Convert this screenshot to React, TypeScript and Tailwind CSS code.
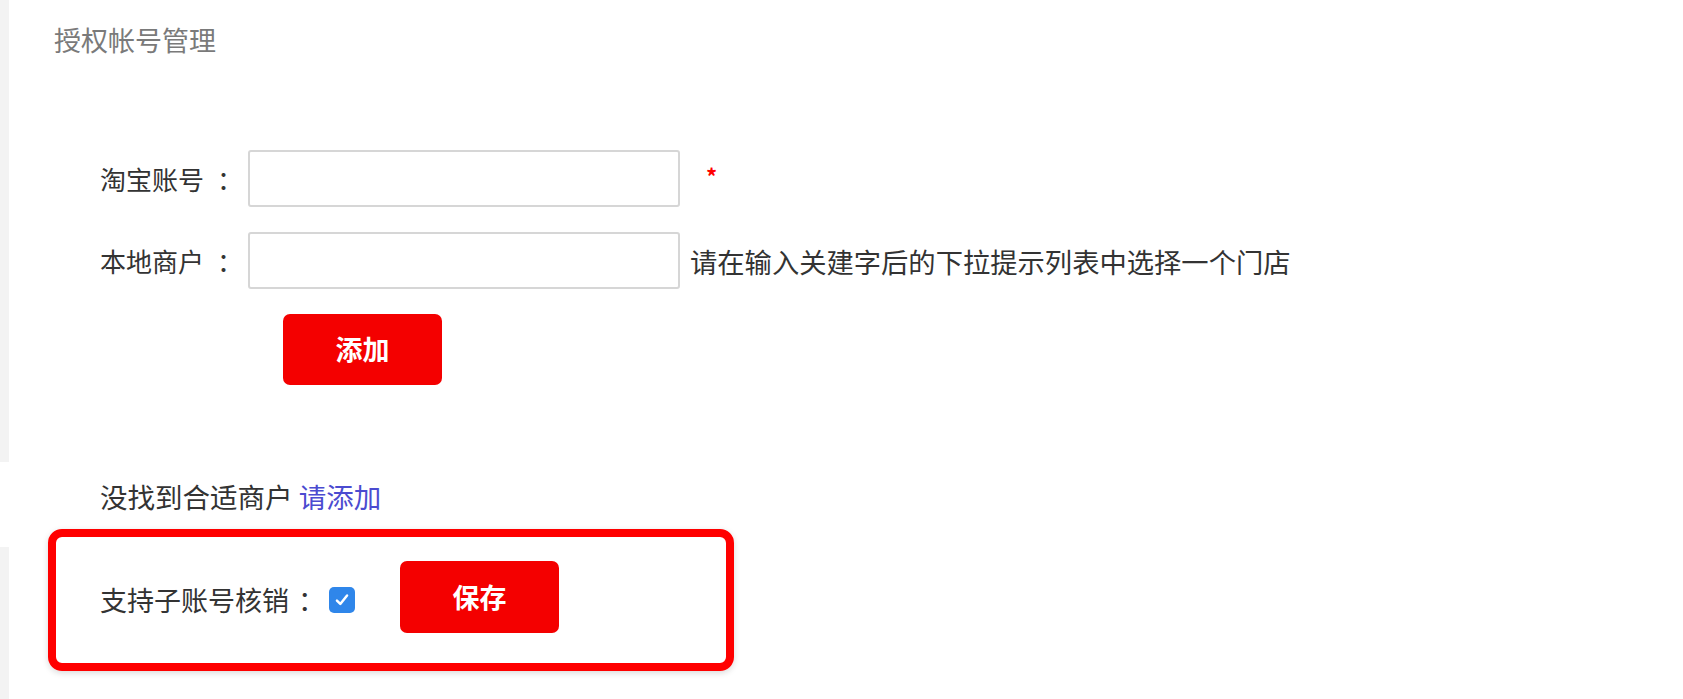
import React from "react";

const font = { fontFamily: '"Microsoft YaHei", "Noto Sans CJK SC", "Liberation Sans", sans-serif' };

function Check() {
  return (
    <span className="flex h-[26px] w-[26px] items-center justify-center rounded-[5px] bg-[#2f86ea]">
      <svg width="18" height="18" viewBox="0 0 16 16" fill="none">
        <path d="M3.5 8.5l3 3 6-7.5" stroke="#fff" strokeWidth="2.2" strokeLinecap="round" strokeLinejoin="round" />
      </svg>
    </span>
  );
}

export default function App() {
  return (
    <div className="flex h-[699px] w-[1683px] overflow-hidden bg-white text-[#333]" style={font}>
      <div className="flex w-[9px] shrink-0 flex-col">
        <div className="h-[462px] bg-[#f3f3f3]" />
        <div className="h-[85px] bg-white" />
        <div className="flex-1 bg-[#f3f3f3]" />
      </div>
      <div className="flex flex-1 flex-col">
        <div className="pl-[45px] pt-[20px] text-[27px] leading-[40px] text-[#7a7a7a]">授权帐号管理</div>

        <div className="mt-[90px] flex flex-col gap-[25px] pl-[91px]">
          <div className="flex items-center">
            <label className="flex w-[148px] text-[26px] leading-[40px]">
              <span>淘宝账号</span>
              <span className="ml-[13px]">：</span>
            </label>
            <input className="h-[57px] w-[432px] rounded-[3px] border-2 border-[#d6d6d6] bg-white outline-none" />
            <span className="ml-[26px] mb-[8px] text-[22px] font-bold leading-none text-[#f00]">*</span>
          </div>
          <div className="flex items-center">
            <label className="flex w-[148px] text-[26px] leading-[40px]">
              <span>本地商户</span>
              <span className="ml-[13px]">：</span>
            </label>
            <input className="h-[57px] w-[432px] rounded-[3px] border-2 border-[#d6d6d6] bg-white outline-none" />
            <span className="ml-[10px] text-[27.3px] leading-[40px]">请在输入关建字后的下拉提示列表中选择一个门店</span>
          </div>
          <div className="pl-[183px]">
            <button className="h-[71px] w-[159px] rounded-[7px] bg-[#f40000] text-[27px] font-bold text-white">添加</button>
          </div>
        </div>

        <div className="mt-[91px] pl-[91px] text-[27.5px] leading-[40px]">
          没找到合适商户 <span className="text-[#4b4bd0]">请添加</span>
        </div>

        <div className="ml-[39px] mt-[13px] flex h-[142px] w-[686px] items-center rounded-[14px] border-[8px] border-[#ff0000] pl-[44px] shadow-[0_2px_6px_rgba(0,0,0,0.15)]">
          <span className="text-[27px] leading-[40px]">支持子账号核销</span>
          <span className="ml-[9px] text-[27px] leading-[40px]">：</span>
          <span className="ml-[4px]">
            <Check />
          </span>
          <button className="ml-[45px] mb-[6px] h-[72px] w-[159px] rounded-[7px] bg-[#f40000] text-[27px] font-bold text-white">保存</button>
        </div>
      </div>
    </div>
  );
}
